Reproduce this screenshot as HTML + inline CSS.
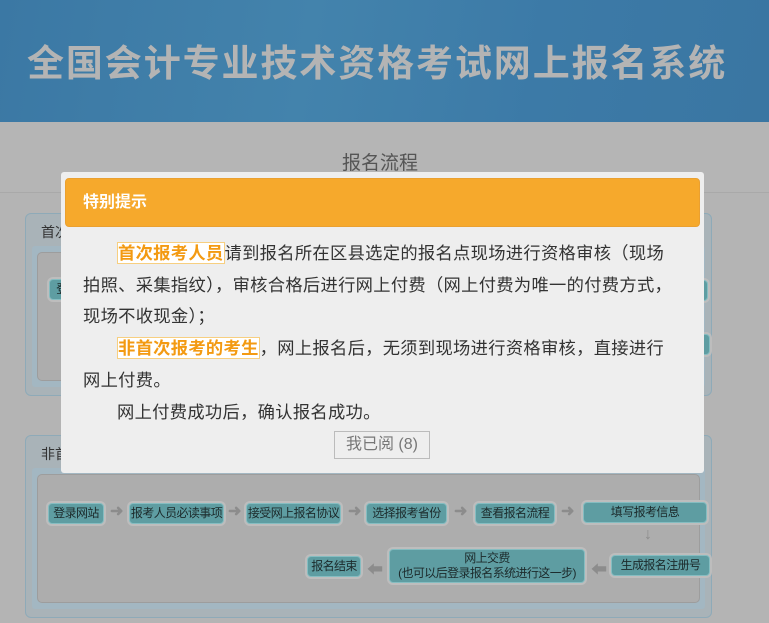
<!DOCTYPE html>
<html><head><meta charset="utf-8"><style>
*{margin:0;padding:0;box-sizing:border-box}
body{width:769px;height:623px;background:#b4b4b4;position:relative;overflow:hidden;font-family:"Liberation Sans","Noto Sans CJK SC",sans-serif}
.hdr{position:absolute;left:0;top:0;width:769px;height:122px;background:linear-gradient(100deg,#3b78a4 0%,#4383ac 40%,#3c7aa7 70%,#3a76a2 100%)}
.hdr h1{position:absolute;left:27px;top:33px;font-size:37px;font-weight:bold;color:#b4b4b4;letter-spacing:1.9px;white-space:nowrap}
.band{position:absolute;left:0;top:122px;width:769px;height:71px;border-bottom:1px solid #a9a9a9;background:#b5b5b5}
.ttl{position:absolute;left:342px;top:148px;font-size:19px;color:#555}
.panel{position:absolute;left:25px;width:687px;height:183px;border:1px solid #8eaab8;border-radius:6px;background:#a9b3b8}
.panel .t{position:absolute;left:15px;top:8px;font-size:14px;color:#333}
.panel .m{position:absolute;left:6px;top:32px;right:6px;bottom:8px;background:#a3b7c2;border-radius:3px}
.panel .i{position:absolute;left:11px;top:38px;right:11px;bottom:14px;background:#adadad;border:1px solid #9d9d9d;border-radius:5px}
.b{position:absolute;height:21px;background:#5e9da2;border:1px solid #85bdc1;border-radius:4px;box-shadow:0 0 0 2px #bdbdbd;font-size:12px;letter-spacing:-0.6px;color:#1c2a2b;text-align:center;line-height:19px;white-space:nowrap;overflow:hidden}
.a{position:absolute;color:#8c8c8c;font-size:16px;font-weight:bold}
.dlg{position:absolute;left:61px;top:172px;width:643px;height:301px;background:#eeeeee;border-radius:3px}
.dh{position:absolute;left:4px;top:6px;width:635px;height:49px;background:#f6a92c;border:1px solid #eaa030;border-radius:4px;color:#fff;font-weight:bold;font-size:16px;line-height:47px;padding-left:17px}
.dt{position:absolute;left:22px;top:66px;width:620px;font-size:17.3px;letter-spacing:0.3px;line-height:31.7px;color:#333;white-space:nowrap}
.dt p{text-indent:34px}
.hl{color:#f39a12;font-weight:bold;background:#fff;border:1px solid #f7cf80}
.ok{position:absolute;left:273px;top:259px;width:96px;height:28px;border:1px solid #bbb;background:#eee;color:#777;font-size:16px;line-height:26px;text-align:center}
</style></head><body>
<div class="hdr"><h1>全国会计专业技术资格考试网上报名系统</h1></div>
<div class="band"></div>
<div class="ttl">报名流程</div>

<div class="panel" style="top:213px"><div class="t">首次报考人员</div><div class="m"></div><div class="i"></div>
<div class="b" style="left:23px;top:65px;width:60px">登录网站</div>
<div class="b" style="left:660px;top:66px;width:22px"></div>
<div class="b" style="left:660px;top:120px;width:24px"></div>
</div>

<div class="panel" style="top:435px"><div class="t">非首次报考人员</div><div class="m"></div><div class="i"></div></div>

<div class="b" style="left:48px;top:503px;width:56px">登录网站</div>
<div class="a" style="left:110px;top:501px">➜</div>
<div class="b" style="left:129px;top:503px;width:95px">报考人员必读事项</div>
<div class="a" style="left:228px;top:501px">➜</div>
<div class="b" style="left:246px;top:503px;width:95px">接受网上报名协议</div>
<div class="a" style="left:348px;top:501px">➜</div>
<div class="b" style="left:366px;top:503px;width:81px">选择报考省份</div>
<div class="a" style="left:454px;top:501px">➜</div>
<div class="b" style="left:475px;top:503px;width:80px">查看报名流程</div>
<div class="a" style="left:561px;top:501px">➜</div>
<div class="b" style="left:583px;top:502px;width:124px">填写报考信息</div>
<div class="a" style="left:644px;top:526px">↓</div>
<div class="b" style="left:611px;top:555px;width:99px">生成报名注册号</div>
<div class="a" style="left:591px;top:556px">⬅</div>
<div class="b" style="left:389px;top:549px;width:196px;height:34px;line-height:15px;padding-top:1px">网上交费<br>(也可以后登录报名系统进行这一步)</div>
<div class="a" style="left:367px;top:556px">⬅</div>
<div class="b" style="left:307px;top:556px;width:54px">报名结束</div>

<div class="dlg">
<div class="dh">特别提示</div>
<div class="dt">
<p><span class="hl">首次报考人员</span>请到报名所在区县选定的报名点现场进行资格审核（现场</p>
<div>拍照、采集指纹），审核合格后进行网上付费（网上付费为唯一的付费方式，</div>
<div>现场不收现金）；</div>
<p><span class="hl">非首次报考的考生</span>，网上报名后，无须到现场进行资格审核，直接进行</p>
<div>网上付费。</div>
<p>网上付费成功后，确认报名成功。</p>
</div>
<div class="ok">我已阅 (8)</div>
</div>
</body></html>
